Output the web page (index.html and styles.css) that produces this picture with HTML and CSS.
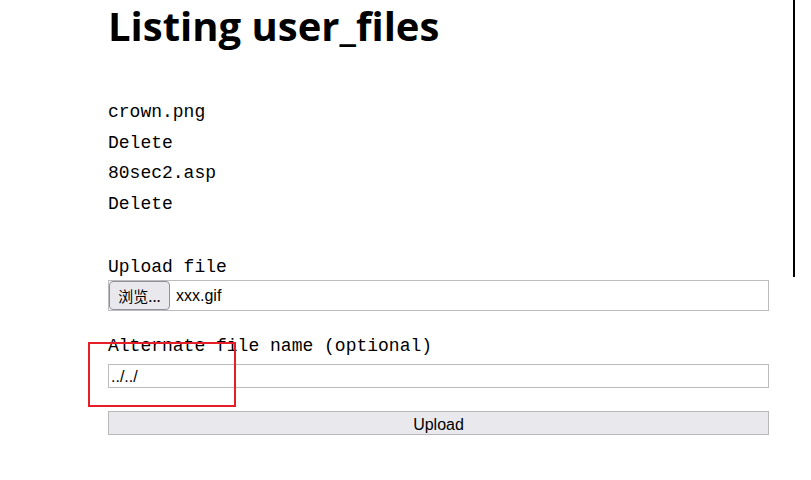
FILE: index.html
```html
<!DOCTYPE html>
<html>
<head>
<meta charset="utf-8">
<link rel="stylesheet" href="styles.css">
</head>
<body>
<div class="page">
  <h1 class="title">Listing user_files</h1>
  <ul class="files">
    <li>crown.png</li>
    <li>Delete</li>
    <li>80sec2.asp</li>
    <li>Delete</li>
  </ul>
  <form class="upload">
    <div class="label label-first">Upload file</div>
    <div class="file-field">
      <span class="browse">浏览...</span>
      <span class="file-name">xxx.gif</span>
    </div>
    <div class="label label-alt">Alternate file name (optional)</div>
    <div class="text-field">../../</div>
    <div class="submit">Upload</div>
  </form>
</div>
<div class="divider"></div>
<div class="highlight"></div>
</body>
</html>
```

FILE: styles.css
```css
html, body {
  margin: 0;
  padding: 0;
  background: #ffffff;
}
body {
  width: 811px;
  height: 480px;
  overflow: hidden;
  position: relative;
}
.page {
  display: flex;
  flex-direction: column;
  padding-left: 108px;
  width: 661px;
}
.title {
  margin: 0;
  height: 97px;
  font-family: "Open Sans", "Noto Sans", sans-serif;
  font-weight: 700;
  font-size: 40px;
  line-height: 52px;
  color: #000;
  white-space: nowrap;
}
.files {
  list-style: none;
  margin: 0;
  padding: 0;
  font-family: "Liberation Mono", monospace;
  font-size: 18px;
  line-height: 30.6px;
  color: #000;
}
.upload {
  display: flex;
  flex-direction: column;
  margin: 0;
}
.label {
  font-family: "Liberation Mono", monospace;
  font-size: 18px;
  line-height: 24px;
  height: 24px;
  color: #000;
}
.label-first {
  margin-top: 36px;
  margin-bottom: 1px;
}
.label-alt {
  margin-top: 23px;
  margin-bottom: 6px;
}
.file-field {
  box-sizing: border-box;
  height: 31px;
  border: 1px solid #bcbcbc;
  display: flex;
  align-items: center;
}
.browse {
  box-sizing: border-box;
  height: 29px;
  width: 61px;
  display: flex;
  align-items: center;
  justify-content: center;
  background: #e9e9ed;
  border: 1px solid #8f8f9d;
  border-radius: 4px;
  font-family: "Noto Sans CJK SC", sans-serif;
  font-size: 15px;
  color: #000;
}
.file-name {
  margin-left: 6px;
  font-family: "Liberation Sans", Arial, sans-serif;
  font-size: 16px;
  color: #000;
}
.text-field {
  box-sizing: border-box;
  height: 24px;
  border: 1px solid #bcbcbc;
  padding-left: 2px;
  font-family: "Liberation Sans", Arial, sans-serif;
  font-size: 16px;
  line-height: 23px;
  color: #000;
}
.submit {
  margin-top: 23px;
  box-sizing: border-box;
  height: 24px;
  border: 1px solid #b8b8b8;
  background: #e9e9ed;
  text-align: center;
  font-family: "Liberation Sans", Arial, sans-serif;
  font-size: 16px;
  line-height: 25px;
  color: #000;
}
.divider {
  position: absolute;
  left: 793px;
  top: 0;
  width: 2px;
  height: 277px;
  background: #000;
}
.highlight {
  position: absolute;
  left: 88px;
  top: 342px;
  width: 148px;
  height: 65px;
  box-sizing: border-box;
  border: 2px solid #e61e28;
}
```
